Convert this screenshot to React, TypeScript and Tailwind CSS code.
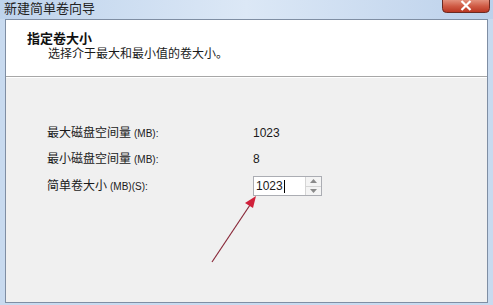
import React from "react";

const font = { fontFamily: '"Liberation Sans", "Noto Sans CJK SC", sans-serif' };

const Row: React.FC<{ label: string; unit: string; children: React.ReactNode; tall?: boolean }> = ({ label, unit, children, tall }) =>
  <div className={`flex items-center ${tall ? "h-[28px]" : "h-[26px]"}`}>
    <div className="w-[206px] text-[12px] text-[#1a1a1a]">
      {label}
      <span className="text-[10px] ml-[3px]">{unit}</span>
    </div>
    <div className="text-[12px] text-[#1a1a1a]">{children}</div>
  </div>;

// window close button drawn as a small graphic
const CloseButton = () =>
  <svg width="48" height="13" viewBox="0 0 48 13" className="shrink-0 mr-[3px]">
    <defs>
      <linearGradient id="cb" x1="0" y1="0" x2="0" y2="1">
        <stop offset="0" stopColor="#e3907c" />
        <stop offset="0.5" stopColor="#cf5a44" />
        <stop offset="1" stopColor="#b83420" />
      </linearGradient>
    </defs>
    <path d="M0.5 0 V8.5 Q0.5 12.5 4.5 12.5 H43.5 Q47.5 12.5 47.5 8.5 V0" fill="url(#cb)" stroke="#6b2a22" />
    <path d="M19.5 1 L24 5.5 L28.5 1 M19.5 10 L24 5.5 L28.5 10" stroke="#fff" strokeWidth="2.2" fill="none" />
  </svg>;

export default function App() {
  return (
    <div className="relative w-[493px] h-[305px] overflow-hidden flex flex-col bg-[#c8daef]" style={font}>
      {/* title bar */}
      <div className="h-[19px] flex justify-between items-start shrink-0 bg-gradient-to-r from-[#bed3ec] via-[#dce8f6] to-[#bcd1eb]">
        <div className="pl-[4px] pt-[1px] text-[13px] leading-[16px] text-[#222]">新建简单卷向导</div>
        <CloseButton />
      </div>

      {/* wizard frame */}
      <div className="mx-[5px] h-[284px] border border-[#7f8ea3] flex flex-col shrink-0">
        <div className="h-[57px] bg-white border-b border-[#a7a7a7] pl-[21px] pt-[11px] shrink-0">
          <div className="text-[13px] leading-[15px] font-bold text-[#111]">指定卷大小</div>
          <div className="pl-[21px] text-[12px] leading-[15px] text-[#1a1a1a] mt-[1px]">选择介于最大和最小值的卷大小。</div>
        </div>
        <div className="flex-1 bg-[#f0f0f0] border-t border-white pl-[41px] pt-[42px]">
          <Row label="最大磁盘空间量" unit="(MB):">1023</Row>
          <Row label="最小磁盘空间量" unit="(MB):">8</Row>
          <Row label="简单卷大小" unit="(MB)(S):" tall>
            <div className="flex h-[20px] w-[69px] border border-[#abadb3] bg-white">
              <div className="flex-1 flex items-center pl-[2px] text-[12px]">
                1023<span className="inline-block w-[1px] h-[13px] bg-black ml-[1px]" />
              </div>
              <div className="w-[16px] flex flex-col border-l border-[#d5d5d5]">
                <div className="flex-1 flex items-center justify-center border-b border-[#d5d5d5] bg-[#f4f4f4]">
                  <svg width="7" height="4" viewBox="0 0 7 4"><path d="M0 4 L3.5 0 L7 4 Z" fill="#8a8a8a" /></svg>
                </div>
                <div className="flex-1 flex items-center justify-center bg-[#f4f4f4]">
                  <svg width="7" height="4" viewBox="0 0 7 4"><path d="M0 0 L3.5 4 L7 0 Z" fill="#8a8a8a" /></svg>
                </div>
              </div>
            </div>
          </Row>
        </div>
      </div>

      {/* red annotation arrow */}
      <svg className="absolute left-0 top-0 pointer-events-none" width="493" height="305">
        <line x1="212" y1="262" x2="250" y2="205" stroke="#8a2a3a" strokeWidth="1.2" />
        <path d="M256 196 L245 203 L253 208 Z" fill="#d0203a" />
      </svg>
    </div>
  );
}
